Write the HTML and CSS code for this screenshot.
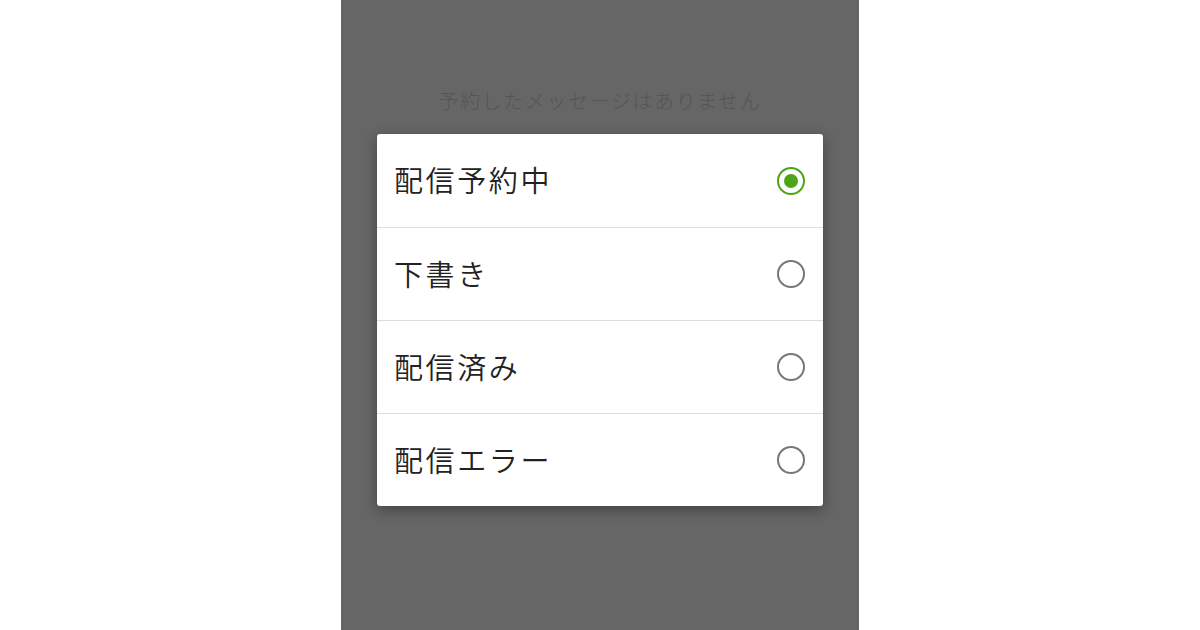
FILE: index.html
```html
<!DOCTYPE html>
<html lang="ja">
<head>
    <meta charset="UTF-8">
    <meta name="viewport" content="width=device-width, initial-scale=1.0">
    <title>配信予約</title>
    <link rel="stylesheet" href="styles.css">
</head>
<body>
    <div class="phone">
        <p class="empty">予約したメッセージはありません</p>
        <div class="dialog">
            <label class="option">
                <span class="label">配信予約中</span>
                <span class="radio checked"></span>
            </label>
            <label class="option">
                <span class="label">下書き</span>
                <span class="radio"></span>
            </label>
            <label class="option">
                <span class="label">配信済み</span>
                <span class="radio"></span>
            </label>
            <label class="option">
                <span class="label">配信エラー</span>
                <span class="radio"></span>
            </label>
        </div>
    </div>
</body>
</html>
```

FILE: styles.css
```css
body {
    margin: 0;
    height: 630px;
    background: #fff;
    display: flex;
    justify-content: center;
    font-family: "Noto Sans CJK JP", "Noto Sans", sans-serif;
    overflow: hidden;
}
.phone {
    width: 518px;
    height: 630px;
    background: #666;
    display: flex;
    flex-direction: column;
    align-items: center;
}
.empty {
    margin: 87px 0 0;
    font-size: 20px;
    font-weight: 300;
    letter-spacing: 1.6px;
    line-height: 28px;
    color: #555;
}
.dialog {
    width: 446px;
    margin-top: 19px;
    background: #fff;
    border-radius: 3px;
    box-shadow: 0 4px 14px rgba(0, 0, 0, 0.35);
}
.option {
    display: flex;
    align-items: center;
    justify-content: space-between;
    height: 92px;
    padding: 0 18px 0 17px;
    border-top: 1px solid #ddd;
    font-size: 29px;
    font-weight: 350;
    letter-spacing: 2.6px;
    color: #222;
}
.option:first-child {
    border-top: none;
    height: 93px;
}
.label {
    padding-bottom: 3px;
}
.radio {
    width: 24px;
    height: 24px;
    border: 2.5px solid #777;
    border-radius: 50%;
    box-sizing: content-box;
    position: relative;
}
.radio.checked {
    border-color: #4ba517;
}
.radio.checked::after {
    content: "";
    position: absolute;
    left: 5px;
    top: 5px;
    width: 14px;
    height: 14px;
    border-radius: 50%;
    background: #4ba517;
}
```
